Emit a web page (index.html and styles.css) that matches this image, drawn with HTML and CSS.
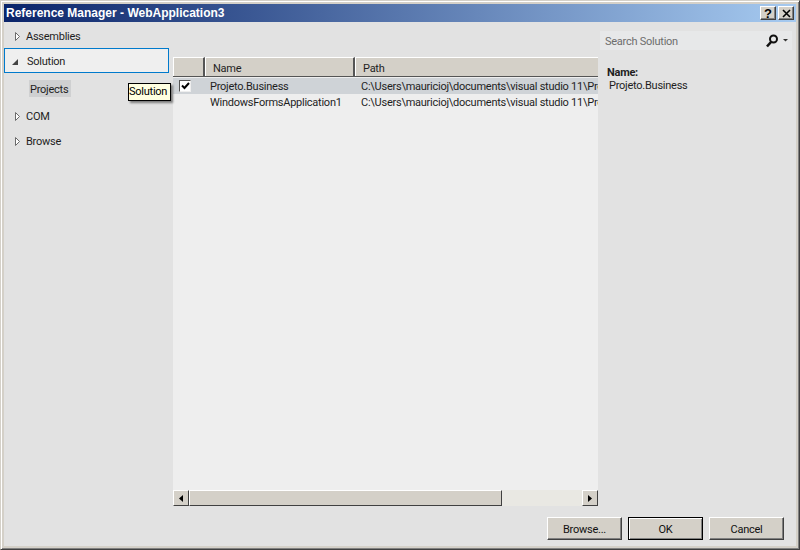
FILE: index.html
```html
<!DOCTYPE html>
<html lang="en">
<head>
<meta charset="utf-8">
<title>Reference Manager - WebApplication3</title>
<link rel="stylesheet" href="styles.css">
</head>
<body>
<div class="window">
  <div class="titlebar">
    <span class="title">Reference Manager - WebApplication3</span>
    <div class="caption-buttons">
      <button class="caption-btn help">?</button>
      <button class="caption-btn close">
        <svg width="9" height="9" viewBox="0 0 9 9"><path d="M1 1l7 7M8 1L1 8" stroke="#000" stroke-width="1.6" fill="none"/></svg>
      </button>
    </div>
  </div>
  <div class="main">
    <nav class="sidebar">
      <div class="nav-row">
        <svg class="arrow" width="7" height="9" viewBox="0 0 7 9"><path d="M1.500 .5v8l4-4z" fill="#fff" stroke="#6b6b6b"/></svg>
        <span>Assemblies</span>
      </div>
      <div class="nav-row active">
        <svg class="arrow arrow-open" width="7" height="9" viewBox="0 0 7 7"><path d="M7 1v6H1z" fill="#444"/></svg>
        <span>Solution</span>
      </div>
      <div class="sub-area"><span class="sub-item">Projects</span></div>
      <div class="nav-row">
        <svg class="arrow" width="7" height="9" viewBox="0 0 7 9"><path d="M1.500 .5v8l4-4z" fill="#fff" stroke="#6b6b6b"/></svg>
        <span>COM</span>
      </div>
      <div class="nav-row">
        <svg class="arrow" width="7" height="9" viewBox="0 0 7 9"><path d="M1.500 .5v8l4-4z" fill="#fff" stroke="#6b6b6b"/></svg>
        <span>Browse</span>
      </div>
    </nav>
    <section class="list">
      <div class="list-head">
        <div class="head-cell col-check"></div>
        <div class="head-cell col-name">Name</div>
        <div class="head-cell col-path">Path</div>
      </div>
      <div class="list-body">
        <div class="list-row selected">
          <div class="col-check">
            <span class="checkbox">
              <svg width="9" height="8" viewBox="0 0 9 8"><path d="M1 3.500l2.500 2.500L8 1" stroke="#000" stroke-width="2" fill="none"/></svg>
            </span>
          </div>
          <div class="cell col-name">Projeto.Business</div>
          <div class="cell col-path">C:\Users\mauricioj\documents\visual studio 11\Pro</div>
        </div>
        <div class="list-row">
          <div class="col-check"></div>
          <div class="cell col-name">WindowsFormsApplication1</div>
          <div class="cell col-path">C:\Users\mauricioj\documents\visual studio 11\Pro</div>
        </div>
      </div>
      <div class="hscroll">
        <div class="scroll-btn">
          <svg width="4" height="7" viewBox="0 0 4 7"><path d="M4 0v7L0 3.500z" fill="#000"/></svg>
        </div>
        <div class="scroll-thumb"></div>
        <div class="scroll-track"></div>
        <div class="scroll-btn">
          <svg width="4" height="7" viewBox="0 0 4 7"><path d="M0 0v7l4-3.500z" fill="#000"/></svg>
        </div>
      </div>
    </section>
    <aside class="details">
      <div class="search">
        <span class="search-text">Search Solution</span>
        <svg width="22" height="14" viewBox="0 0 22 14"><circle cx="7.500" cy="5" r="3.500" fill="none" stroke="#111" stroke-width="2"/><path d="M5 8l-4 4.500" stroke="#111" stroke-width="2.600" fill="none"/><path d="M17 5h5l-2.500 2.500z" fill="#333"/></svg>
      </div>
      <div class="detail-label">Name:</div>
      <div class="detail-value">Projeto.Business</div>
    </aside>
  </div>
  <div class="footer">
    <button class="btn">Browse...</button>
    <button class="btn default">OK</button>
    <button class="btn">Cancel</button>
  </div>
  <div class="tooltip">Solution</div>
</div>
</body>
</html>
```
FILE: styles.css
```css
* { box-sizing: border-box; }
html, body { margin: 0; padding: 0; }
body {
  width: 800px;
  height: 550px;
  overflow: hidden;
  font-family: "Roboto", "Liberation Sans", sans-serif;
  font-size: 11px;
  letter-spacing: -0.25px;
  color: #1e1e1e;
}
.window {
  position: relative;
  width: 800px;
  height: 550px;
  display: flex;
  flex-direction: column;
  padding: 3px;
  background: #d4d0c8;
  border: 1px solid;
  border-color: #d4d0c8 #404040 #404040 #d4d0c8;
  box-shadow: inset 1px 1px 0 #fff, inset -1px -1px 0 #808080;
}
.titlebar {
  flex: none;
  height: 18px;
  display: flex;
  align-items: center;
  justify-content: space-between;
  padding: 0 2px;
  background: linear-gradient(to right, #0a246a, #a6caf0);
}
.title {
  font-family: "Liberation Sans", sans-serif;
  font-weight: 700;
  font-size: 12px;
  letter-spacing: 0;
  color: #fff;
}
.caption-buttons { display: flex; gap: 2px; }
.caption-btn {
  width: 16px;
  height: 14px;
  padding: 0;
  display: flex;
  align-items: center;
  justify-content: center;
  font-family: "Liberation Sans", sans-serif;
  font-weight: 700;
  font-size: 13px;
  line-height: 1;
  color: #000;
  background: #d4d0c8;
  border: 1px solid;
  border-color: #fff #404040 #404040 #fff;
  box-shadow: inset -1px -1px 0 #808080;
}
.main {
  flex: 1;
  min-height: 0;
  display: flex;
  background: #e2e2e2;
}
.sidebar { flex: none; width: 169px; padding-top: 1px; }
.nav-row {
  height: 25px;
  width: 165px;
  display: flex;
  align-items: center;
  gap: 5px;
  padding: 2px 0 0 9px;
  border: 1px solid transparent;
  line-height: 16px;
}
.nav-row.active {
  background: #efefef;
  border-color: #007acc;
}
.arrow { flex: none; }
.arrow-open { margin: 0 4px 0 -3px; }
.sub-area {
  height: 30px;
  display: flex;
  align-items: flex-start;
  padding: 7px 0 0 25px;
}
.sub-item {
  height: 17px;
  padding: 2px 3px 0 1px;
  line-height: 15px;
  background: #cfd0d1;
}
.list {
  flex: none;
  width: 425px;
  margin: 35px 0 5px;
  display: flex;
  flex-direction: column;
  background: #eeeeee;
}
.list-head {
  flex: none;
  height: 20px;
  display: flex;
  border-bottom: 1px solid #555;
}
.head-cell {
  height: 19px;
  padding: 3px 0 0 7px;
  line-height: 15px;
  background: #d4d0c8;
  border-top: 1px solid #fff;
  border-left: 1px solid #fff;
  border-right: 2px solid #555;
}
.col-check { flex: none; width: 32px; }
.col-name { flex: none; width: 150px; }
.col-path { flex: 1; min-width: 0; }
.head-cell.col-path { border-right: 0; }
.list-body { flex: 1; min-height: 0; }
.list-row {
  height: 16px;
  display: flex;
  line-height: 16px;
}
.list-row.selected { margin-top: 1px; background: #cfd3d7; }
.cell {
  padding: 1px 0 0 5px;
  line-height: 15px;
  white-space: nowrap;
  overflow: hidden;
}
.cell.col-path { padding-left: 6px; }
.list-row .col-check { display: flex; padding: 2px 0 0 6px; }
.checkbox {
  width: 12px;
  height: 12px;
  display: flex;
  align-items: center;
  justify-content: center;
  background: #fff;
  border: 1px solid;
  border-color: #555 #eee #eee #555;
}
.hscroll {
  flex: none;
  height: 16px;
  display: flex;
  background: #e9e8e3;
}
.scroll-btn {
  flex: none;
  width: 16px;
  height: 16px;
  display: flex;
  align-items: center;
  justify-content: center;
  background: #d4d0c8;
  border: 1px solid;
  border-color: #fff #404040 #404040 #fff;
}
.scroll-thumb {
  flex: none;
  width: 313px;
  background: #d4d0c8;
  border: 1px solid;
  border-color: #fff #404040 #404040 #fff;
}
.scroll-track { flex: 1; }
.details { flex: 1; min-width: 0; padding: 9px 4px 0 2px; }
.search {
  height: 19px;
  display: flex;
  align-items: center;
  justify-content: space-between;
  padding: 0 4px 0 5px;
  background: #e7e8e9;
}
.search-text { padding-top: 2px; color: #6d6d6d; }
.detail-label {
  margin: 16px 0 0 7px;
  line-height: 14px;
  font-weight: 700;
}
.detail-value { margin-left: 9px; line-height: 12px; }
.footer {
  flex: none;
  height: 35px;
  display: flex;
  justify-content: flex-end;
  gap: 6px;
  padding: 6px 12px 0 0;
  background: #e2e2e2;
}
.btn {
  width: 75px;
  height: 23px;
  padding: 2px 0 0;
  font: inherit;
  letter-spacing: inherit;
  color: #111;
  background: #d4d0c8;
  border: 1px solid;
  border-color: #fff #404040 #404040 #fff;
  box-shadow: inset -1px -1px 0 #808080;
}
.btn.default {
  border-color: #000;
  box-shadow: inset 1px 1px 0 #fff, inset -1px -1px 0 #808080;
}
.tooltip {
  position: absolute;
  left: 127px;
  top: 82px;
  width: 43px;
  height: 18px;
  line-height: 16px;
  white-space: nowrap;
  color: #000;
  background: #ffffe1;
  border: 1px solid #000;
  box-shadow: 2px 2px 2px rgba(0, 0, 0, .45);
}
```
